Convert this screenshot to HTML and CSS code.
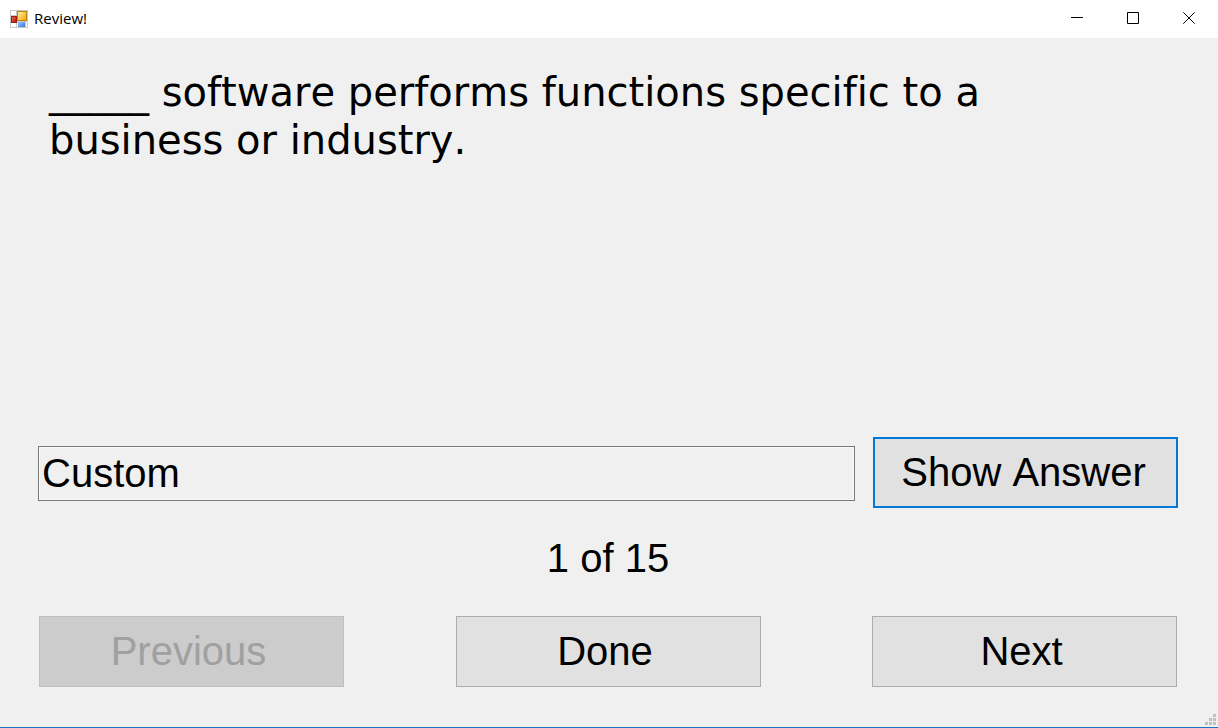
FILE: index.html
```
<!DOCTYPE html>
<html lang="en">
<head>
<meta charset="utf-8">
<title>Review!</title>
<link rel="stylesheet" href="styles.css">
</head>
<body>
<div class="window">
  <header class="titlebar">
    <svg class="app-icon" width="18" height="18" viewBox="0 0 18 18" aria-hidden="true">
      <defs>
        <linearGradient id="gold" x1="0" y1="0" x2="1" y2="1"><stop offset="0" stop-color="#fff0a0"/><stop offset="1" stop-color="#eea800"/></linearGradient>
        <linearGradient id="red" x1="0" y1="0" x2="1" y2="1"><stop offset="0" stop-color="#e06850"/><stop offset="1" stop-color="#b01810"/></linearGradient>
        <linearGradient id="blue" x1="0" y1="0" x2="1" y2="1"><stop offset="0" stop-color="#9cc4ff"/><stop offset="1" stop-color="#3c74e0"/></linearGradient>
      </defs>
      <rect width="18" height="18" fill="#c9c9c9"/>
      <path d="M1 1h5v4H1zM1 13h5v4H1zM7 13h1v4H7zM16 12h1v5h-1z" fill="#fff"/>
      <rect x="1" y="6" width="6" height="7" fill="#a01c14"/>
      <rect x="2" y="7" width="4" height="5" fill="url(#red)"/>
      <rect x="7" y="1" width="10" height="10" fill="#b88410"/>
      <rect x="8" y="2" width="8" height="8" fill="url(#gold)"/>
      <rect x="8" y="12" width="7" height="5" fill="url(#blue)"/>
    </svg>
    <h1 class="title">Review!</h1>
    <div class="controls">
      <button class="control" type="button" aria-label="Minimize"><svg width="12" height="12" viewBox="0 0 12 12"><path d="M0 5.5h12"/></svg></button>
      <button class="control" type="button" aria-label="Maximize"><svg width="12" height="12" viewBox="0 0 12 12"><path d="M.5 .5h11v11H.5z"/></svg></button>
      <button class="control" type="button" aria-label="Close"><svg width="12" height="12" viewBox="0 0 12 12"><path d="M.3 .3l11.4 11.4M11.7 .3L.3 11.7"/></svg></button>
    </div>
  </header>
  <main class="content">
    <p class="question">_____ software performs functions specific to a business or industry.</p>
    <div class="answer-row">
      <input class="answer" type="text" value="Custom" aria-label="Answer" readonly>
      <button class="button button-default" type="button">Show Answer</button>
    </div>
    <p class="progress">1 of 15</p>
    <nav class="nav-row" aria-label="Questions">
      <button class="button" type="button" disabled>Previous</button>
      <button class="button" type="button">Done</button>
      <button class="button" type="button">Next</button>
    </nav>
  </main>
  <svg class="grip" width="12" height="12" viewBox="0 0 12 12" aria-hidden="true">
    <path d="M8 0h3v3H8zM4 4h3v3H4zM8 4h3v3H8zM0 8h3v3H0zM4 8h3v3H4zM8 8h3v3H8z"/>
  </svg>
</div>
</body>
</html>
```
FILE: styles.css
```
* {
  box-sizing: border-box;
}

body {
  margin: 0;
  color: #000;
  font-family: "Liberation Sans", Arial, sans-serif;
}

.window {
  position: relative;
  display: flex;
  flex-direction: column;
  min-height: 100vh;
  background: #f0f0f0;
  border-bottom: 1px solid #1f72b8;
}

.titlebar {
  display: flex;
  align-items: center;
  height: 38px;
  padding-left: 10px;
  background: #fff;
}

.title {
  flex: 1;
  margin: 0 0 0 6px;
  padding-bottom: 2px;
  font: 400 15px/20px "Open Sans", "Noto Sans", sans-serif;
}

.controls {
  display: flex;
  align-self: stretch;
  padding-right: 1px;
}

.control {
  display: flex;
  align-items: center;
  justify-content: center;
  width: 56px;
  padding: 0 0 2px;
  border: 0;
  background: none;
}

.control svg {
  fill: none;
  stroke: #000;
}

.content {
  display: flex;
  flex: 1;
  flex-direction: column;
  padding: 30px 40px 40px 38px;
}

.question {
  flex: 1;
  margin: 0;
  padding: 0 160px 0 11px;
  font: 40px/48px "DejaVu Sans", Verdana, sans-serif;
  font-kerning: none;
  font-variant-ligatures: none;
}

.answer-row {
  display: flex;
  align-items: center;
  gap: 18px;
}

.answer {
  flex: 1;
  min-width: 0;
  height: 55px;
  margin-top: 2px;
  padding: 0 3px;
  border: 1px solid #7a7a7a;
  outline: 1px solid #fafafa;
  outline-offset: -2px;
  background: #f0f0f0;
  color: #000;
  font: 40px/48px "Liberation Sans", Arial, sans-serif;
}

.progress {
  margin: 26px 0 34px;
  font-size: 40px;
  line-height: 48px;
  text-align: center;
}

.nav-row {
  display: flex;
  justify-content: space-between;
  padding: 0 1px;
}

.button {
  width: 305px;
  height: 71px;
  padding: 0 6px 2px 0;
  border: 1px solid #adadad;
  background: #e1e1e1;
  color: #000;
  font: 40px/48px "Liberation Sans", Arial, sans-serif;
  font-kerning: none;
}

.button-default {
  padding-right: 4px;
  border: 2px solid #0078d7;
}

.button:disabled {
  border-color: #bfbfbf;
  background: #ccc;
  color: #a0a0a0;
}

.grip {
  position: absolute;
  right: 1px;
  bottom: 1px;
  fill: #c0c0c0;
}
```
